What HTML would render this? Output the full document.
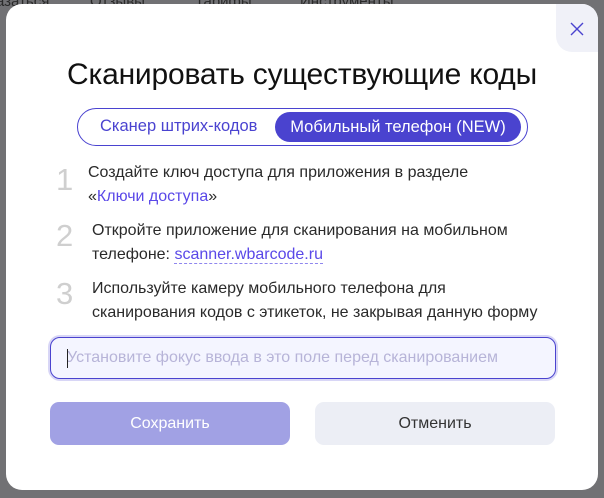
<!DOCTYPE html>
<html><head><meta charset="utf-8"><style>
*{box-sizing:border-box;margin:0;padding:0}
body{width:604px;height:498px;overflow:hidden;background:#717174;font-family:"Liberation Sans","Noto Sans CJK SC",sans-serif;position:relative}
.bgt{position:absolute;top:-7px;font-size:15px;color:#2a2a2a}
.m{position:absolute;left:6px;top:4px;width:592px;height:486px;background:#fff;border-radius:16px}
.cl{position:absolute;right:0;top:0;width:42px;height:48px;background:#f0f1f8;border-radius:0 16px 0 16px}
h1{position:absolute;left:0;right:0;top:54px;text-align:center;font-size:30px;font-weight:400;color:#111;letter-spacing:-0.2px}
.tg{position:absolute;left:71px;top:104px;width:451px;height:38px;border:1.5px solid #4a43d0;border-radius:19px}
.tg span{position:absolute;top:0;line-height:35px;font-size:16.5px}
.a{left:22px;color:#4a43d0}
.b{left:197px;top:3px!important;height:30px;line-height:30px!important;width:246px;background:#4a43cf;color:#fff;border-radius:15px;text-align:center}
.n{position:absolute;left:50px;font-size:31px;color:#cfcfcf}
.t{position:absolute;font-size:16px;line-height:24px;color:#2a2a2a}
.lk{color:#5a48e8}
.in{position:absolute;left:44px;top:333px;width:506px;height:42px;border:1.5px solid #4a43cf;border-radius:10px;background:#f4f5ff;box-shadow:0 0 0 2px #d8d6f6;font-size:16px;color:#b7b4d8;line-height:39px;padding-left:16px}
.in i{position:absolute;left:16px;top:11px;width:1px;height:19px;background:#222}
.btn{position:absolute;top:398px;height:43px;border-radius:9px;text-align:center;line-height:43px;font-size:16px}
</style></head><body>
<div class="bgt" style="left:-4px">азаться</div><div class="bgt" style="left:90px">Отзывы</div><div class="bgt" style="left:195px">Тарифы</div><div class="bgt" style="left:300px">Инструменты</div>
<div class="m">
<div class="cl"><svg width="42" height="48" viewBox="0 0 42 48"><path d="M15 19L27 31M27 19L15 31" stroke="#4a43cf" stroke-width="1.4" fill="none"/></svg></div>
<h1>Сканировать существующие коды</h1>
<div class="tg"><span class="a">Сканер штрих-кодов</span><span class="b">Мобильный телефон (NEW)</span></div>
<div class="n" style="top:158px">1</div>
<div class="t" style="left:82px;top:157px">Создайте ключ доступа для приложения в разделе<br>«<span class="lk">Ключи доступа</span>»</div>
<div class="n" style="top:214px">2</div>
<div class="t" style="left:86px;top:215px">Откройте приложение для сканирования на мобильном<br>телефоне: <span class="lk" style="border-bottom:1px dashed #8f86ee">scanner.wbarcode.ru</span></div>
<div class="n" style="top:272px">3</div>
<div class="t" style="left:86px;top:273px">Используйте камеру мобильного телефона для<br>сканирования кодов с этикеток, не закрывая данную форму</div>
<div class="in"><i></i>Установите фокус ввода в это поле перед сканированием</div>
<div class="btn" style="left:44px;width:240px;background:#a1a1e4;color:#fff">Сохранить</div>
<div class="btn" style="left:309px;width:240px;background:#eceef5;color:#333">Отменить</div>
</div>
</body></html>
